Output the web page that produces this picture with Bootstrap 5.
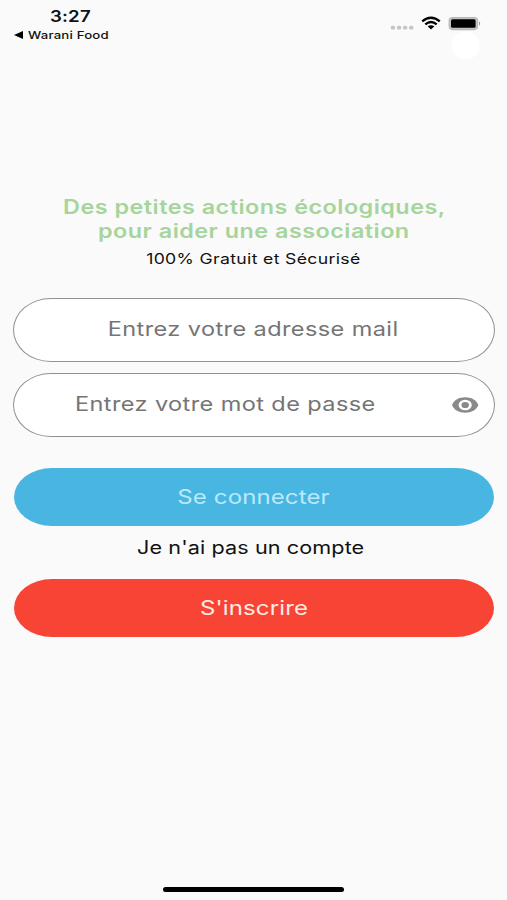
<!DOCTYPE html>
<html lang="fr">
<head>
<meta charset="utf-8">
<meta name="viewport" content="width=device-width, initial-scale=1">
<title>Connexion</title>
<link rel="stylesheet" href="https://cdn.jsdelivr.net/npm/bootstrap@5.3.0/dist/css/bootstrap.min.css">
<style>
body { background: #fafafa; color: #111; font-family: Inter, "Liberation Sans", sans-serif; }
.screen { height: 900px; overflow: hidden; }
.status { height: 62px; }
.wide { display: inline-block; white-space: nowrap; transform: scaleX(1.2); }
.clock { margin-left: 50px; padding-top: 7px; font-size: 15.5px; line-height: 19px; font-weight: 600; }
.clock .wide, .back .wide { transform-origin: left; }
.clock .wide { letter-spacing: .15px; }
.back { margin-left: 14px; font-size: 11px; line-height: 19px; font-weight: 500; letter-spacing: .16px; }
.back svg { margin: 0 5px 1px 0; }
.indicators { width: 137px; height: 62px; }
.intro { margin-top: 133px; }
.headline { color: #a5d59b; font-size: 19.5px; line-height: 24px; font-weight: 600; letter-spacing: .39px; padding-left: 1px; }
.subline { font-size: 14.7px; line-height: 20px; margin-top: 6px; letter-spacing: .28px; }
.pill { border-radius: 38px / 50%; }
.field { height: 64px; margin: 0 12.5px; background: #fff; border: 1.5px solid #919191; color: #757575; font-size: 19.6px; letter-spacing: .34px; }
.fields { margin-top: 29px; gap: 10.5px; }
.eye { width: 56px; }
.action, .action:hover { height: 58px; margin: 0 13.5px 0 14px; padding: 1px 0 0; border: 0; font-size: 20px; letter-spacing: .1px; }
.login, .login:hover { background: #49b6e2; color: #b9eafa; margin-top: 31px; }
.signup, .signup:hover { background: #f74435; color: #ffeae6; }
.question { height: 53px; padding: 8px 5px 0 0; font-size: 18px; line-height: 28px; letter-spacing: .08px; }
.home-bar { width: 181px; height: 5.5px; background: #000; margin-bottom: 8px; }
</style>
</head>
<body>
<main class="screen d-flex flex-column">
  <header class="status d-flex justify-content-between flex-shrink-0">
    <div>
      <div class="clock"><span class="wide">3:27</span></div>
      <div class="back d-flex align-items-center"><svg width="9" height="8" viewBox="0 0 9 8"><path d="M0 4 9 0v8z"/></svg><span class="wide">Warani Food</span></div>
    </div>
    <svg class="indicators" viewBox="370 0 137 62" aria-hidden="true">
      <circle cx="465.5" cy="45.5" r="14" fill="#fff"/>
      <g fill="#c5c5c5"><rect x="390.8" y="25.7" width="4.3" height="3.8" rx="1.5"/><rect x="396.9" y="25.7" width="4.3" height="3.8" rx="1.5"/><rect x="403" y="25.7" width="4.3" height="3.8" rx="1.5"/><rect x="409.1" y="25.7" width="4.3" height="3.8" rx="1.5"/></g>
      <g fill="none" stroke="#000" stroke-width="2.3"><path d="M422.2 21.3Q431 14.2 439.8 21.3"/><path d="M425.3 24.3Q431 19.7 436.7 24.3"/></g>
      <path d="M427.6 26.3Q431 24 434.4 26.3L431 29.4z"/>
      <rect x="449.2" y="17.6" width="28.4" height="12" rx="3.5" fill="#c4c4c4" stroke="#b8b8b8" stroke-width="1.2"/>
      <rect x="451" y="19.3" width="24.6" height="8.5" rx="1.5"/>
      <path d="M479 21.3q2.4 2.2 0 4.5z" fill="#999"/>
    </svg>
  </header>

  <section class="intro text-center">
    <h1 class="headline mb-0"><span class="wide">Des petites actions écologiques,</span><br><span class="wide">pour aider une association</span></h1>
    <div class="subline"><span class="wide">100% Gratuit et Sécurisé</span></div>
  </section>

  <section class="fields d-flex flex-column">
    <div class="field pill d-flex align-items-center justify-content-center"><span class="wide">Entrez votre adresse mail</span></div>
    <div class="field pill d-flex align-items-center"><span class="flex-fill text-center"><span class="wide">Entrez votre mot de passe</span></span>
      <svg class="eye" height="20" viewBox="0 0 56 20" aria-label="Afficher le mot de passe"><path fill="#8a8a8a" fill-rule="evenodd" d="M14 10C16 5 21 2.3 27.2 2.3S38.4 5 40.4 10C38.4 15 33.4 17.7 27.2 17.7S16 15 14 10ZM20.6 10a6.6 5.3 0 1 0 13.2 0a6.6 5.3 0 1 0-13.2 0ZM23.4 10a3.8 3.1 0 1 0 7.6 0a3.8 3.1 0 1 0-7.6 0Z"/></svg>
    </div>
  </section>

  <button type="button" class="btn action login pill flex-shrink-0"><span class="wide">Se connecter</span></button>
  <div class="question text-center"><span class="wide">Je n'ai pas un compte</span></div>
  <button type="button" class="btn action signup pill flex-shrink-0"><span class="wide">S'inscrire</span></button>

  <div class="home-bar rounded-pill mt-auto mx-auto flex-shrink-0"></div>
</main>
<script src="https://cdn.jsdelivr.net/npm/bootstrap@5.3.0/dist/js/bootstrap.bundle.min.js"></script>
</body>
</html>
